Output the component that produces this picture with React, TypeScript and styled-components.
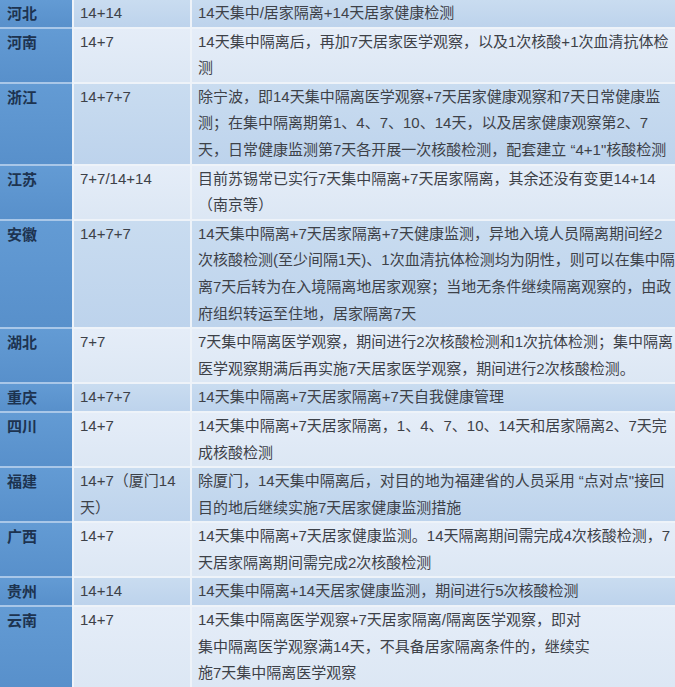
import styled, { createGlobalStyle } from "styled-components";

const GlobalStyle = createGlobalStyle`
  html, body {
    margin: 0;
    padding: 0;
    background: #f4f7fb;
  }
  body {
    font-family: "Liberation Sans", "Noto Sans CJK SC", sans-serif;
  }
`;

type Tone = "dark" | "light";

interface Entry {
  province: string;
  policy: string[];
  detail: string[];
}

const DATA: Entry[] = [
  { province: "河北", policy: ["14+14"], detail: ["14天集中/居家隔离+14天居家健康检测"] },
  {
    province: "河南",
    policy: ["14+7"],
    detail: ["14天集中隔离后，再加7天居家医学观察，以及1次核酸+1次血清抗体检", "测"],
  },
  {
    province: "浙江",
    policy: ["14+7+7"],
    detail: [
      "除宁波，即14天集中隔离医学观察+7天居家健康观察和7天日常健康监",
      "测；在集中隔离期第1、4、7、10、14天，以及居家健康观察第2、7",
      "天，日常健康监测第7天各开展一次核酸检测，配套建立 “4+1\"核酸检测",
    ],
  },
  {
    province: "江苏",
    policy: ["7+7/14+14"],
    detail: ["目前苏锡常已实行7天集中隔离+7天居家隔离，其余还没有变更14+14", "（南京等）"],
  },
  {
    province: "安徽",
    policy: ["14+7+7"],
    detail: [
      "14天集中隔离+7天居家隔离+7天健康监测，异地入境人员隔离期间经2",
      "次核酸检测(至少间隔1天)、1次血清抗体检测均为阴性，则可以在集中隔",
      "离7天后转为在入境隔离地居家观察；当地无条件继续隔离观察的，由政",
      "府组织转运至住地，居家隔离7天",
    ],
  },
  {
    province: "湖北",
    policy: ["7+7"],
    detail: [
      "7天集中隔离医学观察，期间进行2次核酸检测和1次抗体检测；集中隔离",
      "医学观察期满后再实施7天居家医学观察，期间进行2次核酸检测。",
    ],
  },
  { province: "重庆", policy: ["14+7+7"], detail: ["14天集中隔离+7天居家隔离+7天自我健康管理"] },
  {
    province: "四川",
    policy: ["14+7"],
    detail: ["14天集中隔离+7天居家隔离，1、4、7、10、14天和居家隔离2、7天完", "成核酸检测"],
  },
  {
    province: "福建",
    policy: ["14+7（厦门14", "天）"],
    detail: [
      "除厦门，14天集中隔离后，对目的地为福建省的人员采用 “点对点\"接回",
      "目的地后继续实施7天居家健康监测措施",
    ],
  },
  {
    province: "广西",
    policy: ["14+7"],
    detail: [
      "14天集中隔离+7天居家健康监测。14天隔离期间需完成4次核酸检测，7",
      "天居家隔离期间需完成2次核酸检测",
    ],
  },
  { province: "贵州", policy: ["14+14"], detail: ["14天集中隔离+14天居家健康监测，期间进行5次核酸检测"] },
  {
    province: "云南",
    policy: ["14+7"],
    detail: [
      "14天集中隔离医学观察+7天居家隔离/隔离医学观察，即对",
      "集中隔离医学观察满14天，不具备居家隔离条件的，继续实",
      "施7天集中隔离医学观察",
    ],
  },
];

const Table = styled.div`
  display: flex;
  flex-direction: column;
  gap: 2px;
  width: 675px;
  height: 687px;
  overflow: hidden;
  background: #eef3f9;
`;

const Row = styled.div`
  display: grid;
  grid-template-columns: 72px 116px 1fr;
  column-gap: 2px;
  flex-shrink: 0;
  /* row separator in the first column is a light blue, not white */
  background: linear-gradient(90deg, #a9c7e8 0 72px, transparent 72px);
  margin-top: -2px;
  padding-top: 2px;

  &:first-child {
    margin-top: 0;
    padding-top: 0;
  }
`;

const Province = styled.div`
  background: linear-gradient(180deg, #639bd4 0%, #5890cb 100%);
  color: #1d3350;
  font-family: "Noto Sans CJK SC", sans-serif;
  font-weight: 700;
  font-size: 15px;
  line-height: 26.6px;
  padding: 0 7px;
`;

const Cell = styled.div<{ $tone: Tone }>`
  background: ${(p) =>
    p.$tone === "dark"
      ? "linear-gradient(180deg, #c9dcf0 0%, #bdd3ec 100%)"
      : "linear-gradient(180deg, #e5edf8 0%, #dce7f4 100%)"};
  color: #3d4148;
  font-size: 15px;
  line-height: 26.6px;
  padding: 0 6px;
  overflow: hidden;
`;

const Line = styled.span`
  display: block;
  white-space: nowrap;
`;

export default function App() {
  return (
    <>
      <GlobalStyle />
      <Table>
        {DATA.map((d, i) => {
          const tone: Tone = i % 2 === 0 ? "dark" : "light";
          return (
            <Row key={d.province}>
              <Province>{d.province}</Province>
              <Cell $tone={tone}>
                {d.policy.map((l) => (
                  <Line key={l}>{l}</Line>
                ))}
              </Cell>
              <Cell $tone={tone}>
                {d.detail.map((l) => (
                  <Line key={l}>{l}</Line>
                ))}
              </Cell>
            </Row>
          );
        })}
      </Table>
    </>
  );
}
